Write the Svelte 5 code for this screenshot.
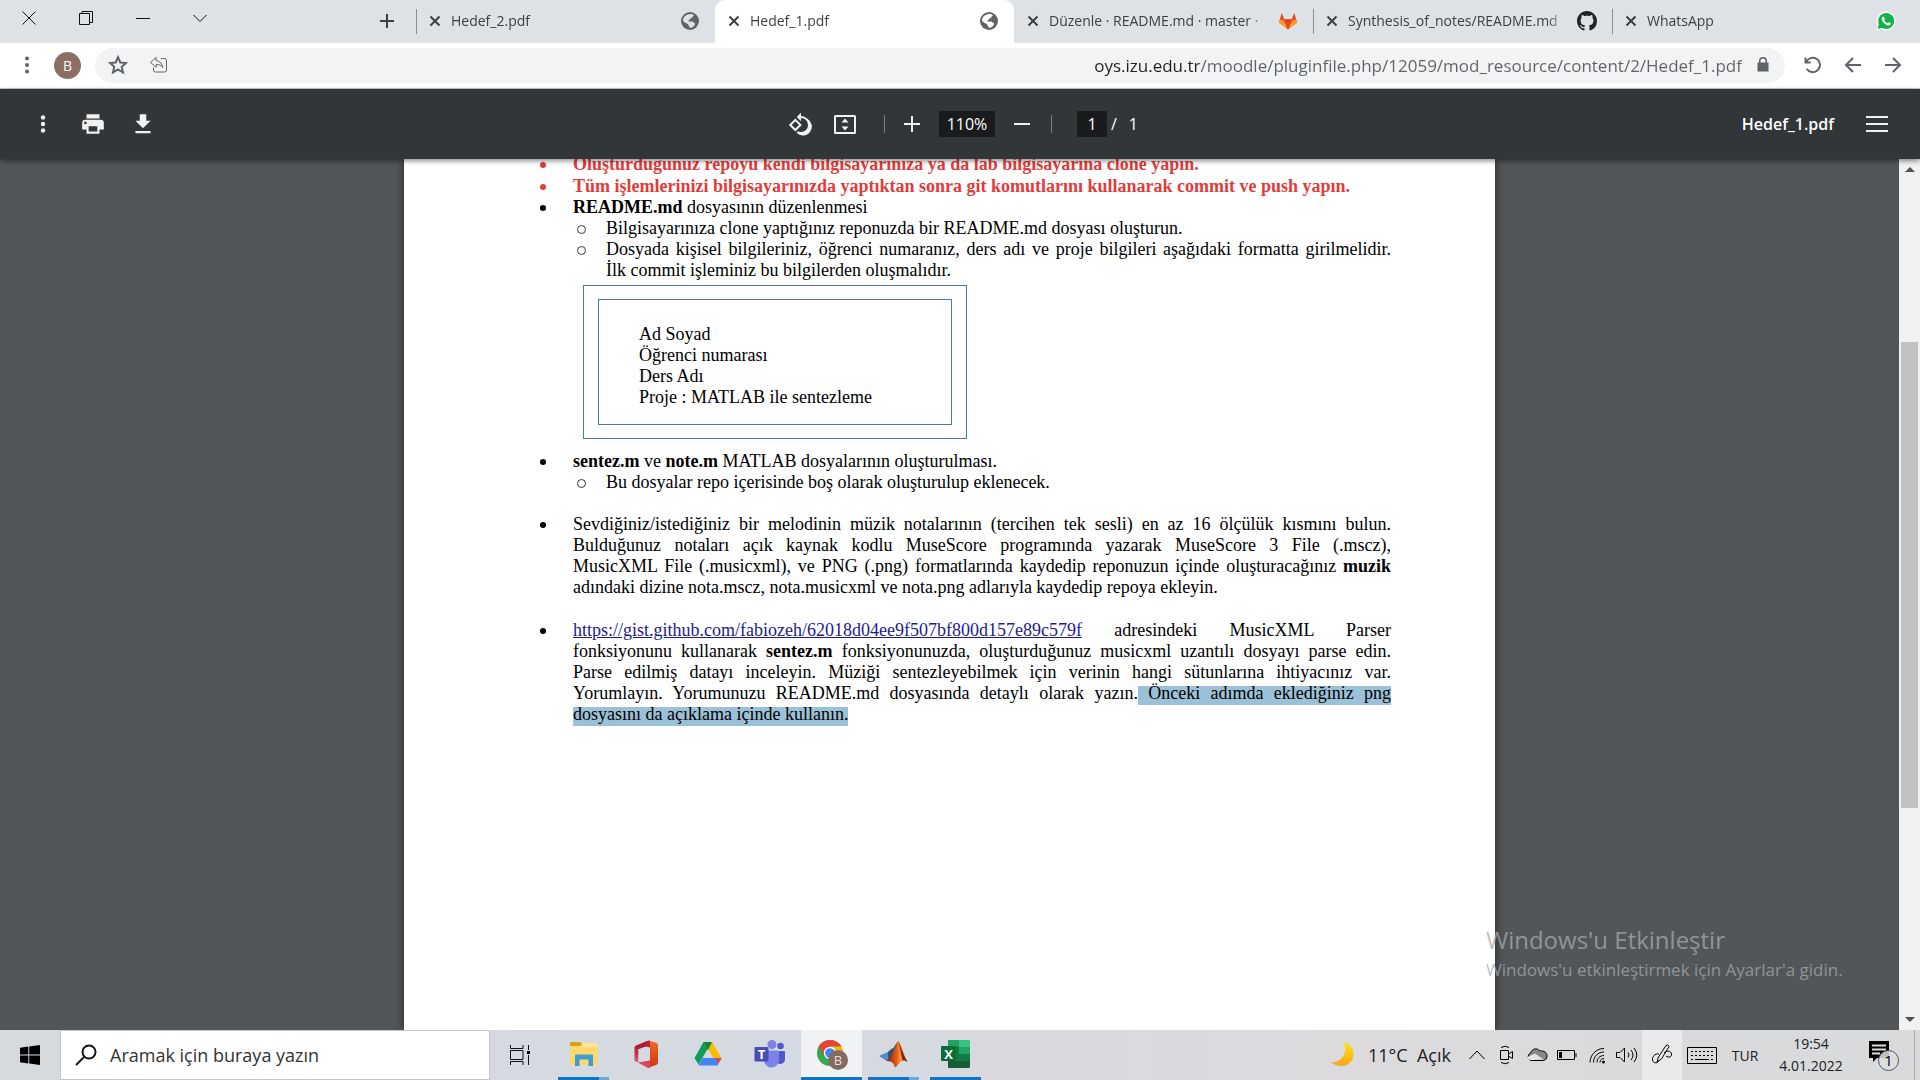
<script>
  const tabs = [
    { title: 'Hedef_2.pdf', icon: 'globe' },
    { title: 'Hedef_1.pdf', icon: 'globe', active: true },
    { title: 'Düzenle · README.md · master ·', icon: 'gitlab' },
    { title: 'Synthesis_of_notes/README.md', icon: 'github' },
    { title: 'WhatsApp', icon: 'whatsapp' },
  ];
  const apps = [
    { name: 'Dosya Gezgini', icon: 'explorer', state: 'multi' },
    { name: 'Office', icon: 'office' },
    { name: 'Google Drive', icon: 'drive' },
    { name: 'Microsoft Teams', icon: 'teams' },
    { name: 'Google Chrome', icon: 'chrome', state: 'focused' },
    { name: 'MATLAB', icon: 'matlab', state: 'multi' },
    { name: 'Excel', icon: 'excel', state: 'open' },
  ];
  let url = $state('oys.izu.edu.tr/moodle/pluginfile.php/12059/mod_resource/content/2/Hedef_1.pdf');
  let zoom = $state('110%');
  let pageNumber = $state('1');
  let query = $state('');
</script>

<div class="screen">
  <header class="tabstrip">
    <div class="window-controls">
      <button aria-label="Kapat"><svg width="14" height="14" viewBox="0 0 14 14"><path d="M.5.5l13 13M13.5.5l-13 13" /></svg></button>
      <button aria-label="Geri yükle"><svg width="14" height="14" viewBox="0 0 14 14"><path d="M.5 2.5h10v11H.5zM3 2.5v-2h10.500v11h-3" /></svg></button>
      <button aria-label="Simge durumuna küçült"><svg width="14" height="14" viewBox="0 0 14 14"><path d="M0 7.500h14" /></svg></button>
      <button aria-label="Sekmelerde ara"><svg width="14" height="14" viewBox="0 0 14 14"><path d="M.5 4l6.500 6.500L13.500 4" /></svg></button>
    </div>
    <button class="new-tab" aria-label="Yeni sekme"><svg width="16" height="16" viewBox="0 0 16 16"><path d="M8 1v14M1 8h14" /></svg></button>
    <nav class="tabs" aria-label="Sekmeler">
      {#each tabs as tab}
        <div class="tab" class:active={tab.active}>
          <button class="tab-close" aria-label="Sekmeyi kapat"><svg width="12" height="12" viewBox="0 0 12 12"><path d="M1.500 1.500l9 9M10.500 1.500l-9 9" /></svg></button>
          <span class="tab-title">{tab.title}</span>
          <svg class="favicon" width="20" height="20" viewBox="0 0 20 20">
            {#if tab.icon === 'globe'}
              <circle cx="10" cy="10" r="9" fill="#5f6368" />
              <path class="land" d="M9 3.200c1.800-.4 3.500-.2 4.800.7-.3 1.200-1.400 1.300-1.500 2.200 0 1-1 1.400-2 1.400-.2 1.200-1 1.600-1.800 1.700v1.200h4c1 .4 1 1.500 2.100 1.600.7.600.3 1.800-.4 2.500-1 1.400-2.600 2.300-4.400 2.400.1-1-.3-1.500-1-1.800-.6-.8-.3-1.700-1.200-2.400C5.500 12 4 11 2.900 9.400 3.100 6.200 5.700 3.600 9 3.200z" />
            {:else if tab.icon === 'gitlab'}
              <path fill="#e24329" d="M10 18.500l-9-7L3.700 2l2.500 6.300h7.600L16.300 2 19 11.500z" />
              <path fill="#fc6d26" d="M10 18.500L1 11.500l1-3.200h4.200zm0 0l9-7-1-3.200h-4.200z" />
              <path fill="#fca326" d="M10 18.500L1 11.500l1.200-2.800 4.500 4zm0 0l9-7-1.200-2.800-4.500 4z" />
              <path fill="#e24329" d="M10 18.500L6.200 8.300h7.600z" />
            {:else if tab.icon === 'github'}
              <path fill="#202328" transform="scale(1.25)" d="M8 0C3.580 0 0 3.580 0 8c0 3.540 2.290 6.530 5.470 7.590.4.070.55-.17.55-.38 0-.19-.01-.82-.01-1.490-2.010.37-2.530-.49-2.690-.94-.09-.23-.48-.94-.82-1.130-.28-.15-.68-.52-.01-.53.63-.01 1.080.58 1.230.82.72 1.210 1.870.87 2.330.66.070-.52.28-.87.51-1.070-1.780-.2-3.640-.89-3.640-3.950 0-.87.31-1.590.82-2.150-.08-.2-.36-1.020.08-2.120 0 0 .67-.21 2.200.82.64-.18 1.320-.27 2-.27s1.360.090 2 .27c1.530-1.040 2.200-.82 2.200-.82.44 1.100.16 1.920.08 2.120.51.560.82 1.270.82 2.150 0 3.070-1.870 3.750-3.650 3.950.29.25.54.73.54 1.480 0 1.070-.01 1.930-.01 2.200 0 .21.15.46.55.38A8.010 8.010 0 0016 8c0-4.420-3.580-8-8-8z" />
            {:else}
              <path fill="#fff" d="M10 .5a9.500 9.500 0 11-4.700 17.800L.5 19.700l1.400-4.800A9.500 9.500 0 0110 .5z" />
              <circle cx="10.200" cy="10" r="8" fill="#12b347" /><path fill="#12b347" d="M2.800 12.500L1.900 18l5.500-1.400z" />
              <path fill="#fff" d="M6.200 6.200c.8-1 1.500-.9 1.800-.2l.8 1.800c.1.500-.8 1.100-.6 1.500.7 1.300 1.700 2.200 3 2.800.5.200 1-1.100 1.500-.9l1.900.9c.5.400.2 1.500-.5 2-1.400 1.100-4 0-5.700-1.600C6.500 10.800 5 8.200 6.200 6.200z" />
            {/if}
          </svg>
        </div>
      {/each}
    </nav>
  </header>

  <div class="addressbar">
    <button class="menu" aria-label="Chrome menüsü"><svg width="20" height="20" viewBox="0 0 20 20" fill="#5f6368"><circle cx="10" cy="3.500" r="2" /><circle cx="10" cy="10" r="2" /><circle cx="10" cy="16.500" r="2" /></svg></button>
    <button class="avatar" aria-label="Profil">B</button>
    <div class="omnibox">
      <button aria-label="Yer işareti ekle"><svg width="20" height="20" viewBox="0 0 20 20"><path d="M10 2.200l2.300 5.300 5.700.5-4.300 3.800 1.300 5.700-5-3-5 3 1.300-5.700L2 8l5.700-.5z" /></svg></button>
      <button class="share" aria-label="Paylaş"><svg width="20" height="20" viewBox="0 0 20 20"><path d="M12 3.500h3.500a2 2 0 012 2v9.500a2 2 0 01-2 2H6.500a2 2 0 01-2-2V12.500M7.200 2.500L1.500 7.500l5.700 4.700V9.400c3 0 5 1 6.600 3.200-.4-3.600-2.600-6.400-6.600-7z" /></svg></button>
      <input class="url" aria-label="Adres" bind:value={url} />
      <button class="lock" aria-label="Site bilgileri"><svg width="14" height="18" viewBox="0 0 14 18"><path fill="#5f6368" stroke="none" d="M3 6.500V5a4 4 0 018 0v1.500h1.500v9h-11v-9zm1.500 0h5V5a2.500 2.500 0 00-5 0z" /></svg></button>
    </div>
    <nav class="history" aria-label="Gezinme">
      <button aria-label="Yenile"><svg width="20" height="20" viewBox="0 0 20 20"><path d="M3.500 6.500a7.200 7.200 0 11.200 7.200M2.500 2.500v5h5.200" /></svg></button>
      <button aria-label="Geri"><svg width="20" height="20" viewBox="0 0 20 20"><path d="M18 10H3M10 3l-7 7 7 7" /></svg></button>
      <button aria-label="İleri"><svg width="20" height="20" viewBox="0 0 20 20"><path d="M2 10h15M10 3l7 7-7 7" /></svg></button>
    </nav>
  </div>

  <div class="pdfbar">
    <div class="pdf-left">
      <button aria-label="Diğer işlemler"><svg width="24" height="24" viewBox="0 0 24 24"><circle cx="12" cy="5.500" r="2.200" /><circle cx="12" cy="12" r="2.200" /><circle cx="12" cy="18.500" r="2.200" /></svg></button>
      <button aria-label="Yazdır"><svg width="26" height="26" viewBox="0 0 24 24"><path d="M18 3H6v4h12zM19 8H5a3 3 0 00-3 3v6h4v4h12v-4h4v-6a3 3 0 00-3-3zm-3 11H8v-5h8zM5 12.200a1.200 1.200 0 110-2.400 1.200 1.200 0 010 2.400z" /></svg></button>
      <button aria-label="İndir"><svg width="26" height="26" viewBox="0 0 24 24"><path d="M19 9h-4V3H9v6H5l7 7zM5 18.500v2h14v-2z" /></svg></button>
    </div>
    <div class="pdf-center">
      <button aria-label="Döndür"><svg width="24" height="24" viewBox="0 0 24 24"><path d="M7.340 6.410L.86 12.900l6.490 6.480 6.490-6.480zM3.690 12.900l3.660-3.660L11 12.900l-3.660 3.660zM19.360 6.640A8.950 8.950 0 0013 4V.76L8.760 5 13 9.240V6a7 7 0 110 14 6.980 6.980 0 01-3-.68l-1.490 1.490A9 9 0 1019.360 6.640z" /></svg></button>
      <button aria-label="Sayfaya sığdır"><svg width="26" height="26" viewBox="0 0 26 26"><path fill-rule="evenodd" d="M3.500 4h19A1.500 1.500 0 0124 5.500v16a1.500 1.500 0 01-1.500 1.500h-19A1.500 1.500 0 012 21.500v-16A1.500 1.500 0 013.500 4zM4 6v15h18V6zM13 7.500l3.500 4h-7zM13 19.500l-3.500-4h7z" /></svg></button>
      <i class="rule zoom-rule"></i>
      <button class="small" aria-label="Yakınlaştır"><svg width="16" height="16" viewBox="0 0 16 16"><path d="M7 0h2v7h7v2H9v7H7V9H0V7h7z" /></svg></button>
      <input class="zoom" aria-label="Yakınlaştırma düzeyi" bind:value={zoom} />
      <button class="small" aria-label="Uzaklaştır"><svg width="16" height="16" viewBox="0 0 16 16"><path d="M0 7h16v2H0z" /></svg></button>
      <i class="rule page-rule"></i>
      <input class="page-no" aria-label="Sayfa numarası" bind:value={pageNumber} />
      <span class="slash">/</span><span class="total">1</span>
    </div>
    <div class="pdf-right">
      <span>Hedef_1.pdf</span>
      <button aria-label="Kenar çubuğu"><svg width="22" height="18" viewBox="0 0 22 18"><path d="M0 1h22v2H0zM0 8h22v2H0zM0 15h22v2H0z" /></svg></button>
    </div>
  </div>

  <div class="viewer">
    <div class="canvas">
      <main class="paper">
        <ul class="doc">
          <li class="red cut">Oluşturduğunuz repoyu kendi bilgisayarınıza ya da lab bilgisayarına clone yapın.</li>
          <li class="red">Tüm işlemlerinizi bilgisayarınızda yaptıktan sonra git komutlarını kullanarak commit ve push yapın.</li>
          <li><b>README.md</b> dosyasının düzenlenmesi
            <ul>
              <li>Bilgisayarınıza clone yaptığınız reponuzda bir README.md dosyası oluşturun.</li>
              <li><span class="full">Dosyada kişisel bilgileriniz, öğrenci numaranız, ders adı ve proje bilgileri aşağıdaki formatta girilmelidir.</span> İlk commit işleminiz bu bilgilerden oluşmalıdır.</li>
            </ul>
            <div class="frame"><div class="frame-inner">
              <p>Ad Soyad</p><p>Öğrenci numarası</p><p>Ders Adı</p><p>Proje : MATLAB ile sentezleme</p>
            </div></div>
          </li>
          <li class="files"><b>sentez.m</b> ve <b>note.m</b> MATLAB dosyalarının oluşturulması.
            <ul><li>Bu dosyalar repo içerisinde boş olarak oluşturulup eklenecek.</li></ul>
          </li>
          <li class="spaced">
            <span class="full">Sevdiğiniz/istediğiniz bir melodinin müzik notalarının (tercihen tek sesli) en az 16 ölçülük kısmını bulun.</span>
            <span class="full">Bulduğunuz notaları açık kaynak kodlu MuseScore programında yazarak MuseScore 3 File (.mscz),</span>
            <span class="full">MusicXML File (.musicxml), ve PNG (.png) formatlarında kaydedip reponuzun içinde oluşturacağınız <b>muzik</b></span>
            adındaki dizine nota.mscz, nota.musicxml ve nota.png adlarıyla kaydedip repoya ekleyin.
          </li>
          <li class="spaced"><a href="https://gist.github.com/fabiozeh/62018d04ee9f507bf800d157e89c579f">https://gist.github.com/fabiozeh/62018d04ee9f507bf800d157e89c579f</a> adresindeki MusicXML Parser fonksiyonunu kullanarak <b>sentez.m</b> fonksiyonunuzda, oluşturduğunuz musicxml uzantılı dosyayı parse edin. Parse edilmiş datayı inceleyin. Müziği sentezleyebilmek için verinin hangi sütunlarına ihtiyacınız var. Yorumlayın. Yorumunuzu README.md dosyasında detaylı olarak yazın.<mark>{' '}Önceki adımda eklediğiniz png dosyasını da açıklama içinde kullanın.</mark></li>
        </ul>
      </main>
    </div>
    <div class="scrollbar" aria-hidden="true">
      <svg width="21" height="21" viewBox="0 0 21 21"><path d="M6 13l5-5 5 5z" /></svg>
      <div class="track"><i class="before"></i><i class="thumb"></i><i class="after"></i></div>
      <svg width="21" height="21" viewBox="0 0 21 21"><path d="M6 8l5 5 5-5z" /></svg>
    </div>
    <aside class="activation">
      <p class="act-title">Windows'u Etkinleştir</p>
      <p>Windows'u etkinleştirmek için Ayarlar'a gidin.</p>
    </aside>
  </div>

  <footer class="taskbar">
    <button class="start" aria-label="Başlat"><svg width="20" height="20" viewBox="0 0 20 20"><path d="M0 2.800l8.300-1.200v8H0zM9.200 1.500L20 0v9.600H9.200zM0 10.500h8.300v7.900L0 17.200zM9.200 10.500H20V20L9.200 18.500z" /></svg></button>
    <label class="search">
      <svg width="22" height="22" viewBox="0 0 22 22"><circle cx="14" cy="8" r="6.500" /><path d="M9.400 12.600L1 21" /></svg>
      <input type="text" placeholder="Aramak için buraya yazın" bind:value={query} />
    </label>
    <button class="taskview" aria-label="Görev görünümü"><svg width="20" height="20" viewBox="0 0 20 20"><path d="M.5 0v3.500h12.500V0M.5 20v-3.500h12.500V20M.5 5.500h12.500v9H.5zM18.500 0v5M18.500 10v10" /><path d="M17 6h3v3h-3z" fill="#000" stroke="none" /></svg></button>
    <div class="apps">
      {#each apps as app}
        <button class="app {app.state ?? ''}" aria-label={app.name}>
          <svg width="32" height="32" viewBox="0 0 32 32">
            {#if app.icon === 'explorer'}
              <path fill="#d9a21b" d="M2 5a1 1 0 011-1h9l2 2-1 3H2z" /><path fill="#ffd96a" d="M2 8h11l2-3h13a1.500 1.500 0 011.500 1.500V26a1 1 0 01-1 1H3a1 1 0 01-1-1z" />
              <path fill="#ffe59a" d="M15 5h13a1.500 1.500 0 011.500 1.500V9H13z" /><path fill="#3f9bd3" d="M7 17.500a1 1 0 011-1h16a1 1 0 011 1V28h-4.500v-6.500h-9V28H7z" />
            {:else if app.icon === 'office'}
              <defs><linearGradient id="officeRed" x1="0" y1="0" x2="0" y2="1"><stop offset="0" stop-color="#a30f24" /><stop offset=".55" stop-color="#c22d4a" /><stop offset="1" stop-color="#e65a74" /></linearGradient><linearGradient id="officeOrange" x1="0" y1="0" x2="0" y2="1"><stop stop-color="#f06a21" /><stop offset="1" stop-color="#cb3716" /></linearGradient></defs>
              <path fill="url(#officeRed)" d="M18.500 2.500L6 7.500a2.600 2.600 0 00-1.500 2.400v13.200l3.800 1.500V11.200l7.700-2.800z" /><path fill="url(#officeOrange)" d="M18.500 2.500l7.600 2.300A2.600 2.600 0 0128 7.300v17.300a2.600 2.600 0 01-1.900 2.500L19 29.500 20 21V9z" /><path fill="#d94558" d="M8 24.500l12-2V30h-2z" /><path fill="#c3202e" d="M16 3.600l4-1v7l-4-1z" />
            {:else if app.icon === 'drive'}
              <path fill="#0f9d58" d="M11.500 4L2.500 20l4 6.500L16 10.200z" /><path fill="#ffba00" d="M12 4h8l9.500 16.300h-8z" /><path fill="#4285f4" d="M10.300 20h19.200l-4 7.500H6.500z" /><path fill="#188038" d="M11.500 4L16 12l4-8z" /><path fill="#ea4335" d="M23 20.500h6.500l-3.200 5z" />
            {:else if app.icon === 'teams'}
              <circle cx="18" cy="6.500" r="4.500" fill="#7b83eb" /><circle cx="26.500" cy="8" r="3.300" fill="#5059c9" /><path fill="#5059c9" d="M21 13h9a1 1 0 011 1v7a5 5 0 01-9 3z" /><path fill="#7b83eb" d="M10 12.500h14a1 1 0 011 1V22a7.500 7.500 0 01-15 0z" /><path fill="#4a4eb0" d="M1.500 9h12a1 1 0 011 1v12.500a1 1 0 01-1 1h-12a1 1 0 01-1-1V10a1 1 0 011-1z" /><text x="7.500" y="21" text-anchor="middle" class="glyph">T</text>
            {:else if app.icon === 'chrome'}
              <circle cx="14" cy="15" r="13" fill="#34a853" /><path fill="#ea4335" d="M2.700 8.500A13 13 0 0125.300 8.500H14L8.400 18.200z" /><path fill="#fbbc04" d="M25.300 8.500A13 13 0 0114 28l5.600-9.800L14 8.500z" /><circle cx="14" cy="15" r="6.200" fill="#fff" /><circle cx="14" cy="15" r="4.800" fill="#4285f4" /><circle cx="22" cy="22" r="10" fill="#846a61" /><text x="22" y="27" text-anchor="middle" class="glyph soft">B</text>
            {:else if app.icon === 'matlab'}
              <defs><linearGradient id="peak" x1="0" y1="0" x2="1" y2="0"><stop stop-color="#7b1f12" /><stop offset=".5" stop-color="#e55b16" /><stop offset=".7" stop-color="#f9a04a" /><stop offset="1" stop-color="#a92b10" /></linearGradient></defs>
              <path fill="#4b8fc4" d="M1 18l9-4 4-4 3 2-6 11-3-.5z" /><path fill="#27556f" d="M10 14l5-3.500L20 3l-4 16-5.500 4z" /><path fill="url(#peak)" d="M8 23c6-3 8-13 12-20 3 1 5.500 14 9.500 21-4-3-6.500-1-9 2-1 1.500-2.500 3-4 3.500 0-4-3-7-8.500-6.500z" /><path fill="#7b2110" d="M21 4c2 5 4 13 8.500 20-2-1.500-3.500-2-4.800-1.500C23 16 22 10 21 4z" />
            {:else}
              <path fill="#21a366" d="M9 2h19.500A1.500 1.500 0 0130 3.500V9H19l-11-1V3a1 1 0 011-1z" /><path fill="#33c481" d="M19 2h9.500A1.500 1.500 0 0130 3.500V9H19z" /><path fill="#107c41" d="M8 8.500h11V23H8z" /><path fill="#21a366" d="M19 9h11v7H19z" /><path fill="#107c41" d="M19 16h11v7H19z" /><path fill="#185c37" d="M8 23h22v5.500a1.500 1.500 0 01-1.500 1.500H9a1 1 0 01-1-1z" /><path fill="#0d6b38" d="M2 8h13a1 1 0 011 1v13a1 1 0 01-1 1H2a1 1 0 01-1-1V9a1 1 0 011-1z" /><text x="8.500" y="20.500" text-anchor="middle" class="glyph">X</text>
            {/if}
          </svg>
        </button>
      {/each}
    </div>

    <div class="tray">
      <button class="weather">
        <svg width="24" height="28" viewBox="0 0 24 28"><defs><linearGradient id="moon" x1="0" y1="0" x2="0" y2="1"><stop stop-color="#ffe600" /><stop offset="1" stop-color="#f5a523" /></linearGradient></defs><path fill="url(#moon)" stroke="none" d="M14 1c8 3 11.500 10 8.500 17-3.500 8-15 9.500-21.500 3 5.500.5 10.500-2 13-7 1.700-4.500 1.500-9 0-13z" /></svg>
        <span>11°C&nbsp; Açık</span>
      </button>
      <button aria-label="Gizli simgeler"><svg width="18" height="20" viewBox="0 0 18 20"><path d="M1.500 14L9 6l7.500 8" /></svg></button>
      <button aria-label="Toplantı"><svg width="18" height="20" viewBox="0 0 18 20"><path d="M2.500 5.500h8v9h-8zM10.500 9l4-2.500v7l-4-2.500M3 2.500Q7 0 11 2.500M3 17.500q4 2.500 8 0" /></svg></button>
      <button aria-label="OneDrive"><svg width="22" height="20" viewBox="0 0 22 20"><path fill="#888" d="M5 15.500a4 4 0 01-.5-7.500C6 3.500 11 2.500 14 6c4-.5 7 1.500 7 5 0 3-2 4.500-4.500 4.500z" /><path fill="#e4e4e4" stroke="none" d="M5 15c-1.800 0-3.200-1-3.500-3L9 8.500l9 6.300z" /></svg></button>
      <button aria-label="Pil"><svg width="20" height="20" viewBox="0 0 20 20"><path d="M.5 5.500h17v9H.5zM19 8v4" /><path d="M2 7h3v6H2z" fill="#000" stroke="none" /></svg></button>
      <button aria-label="Wi-Fi"><svg width="18" height="20" viewBox="0 0 18 20"><path d="M2 17.500C2 10 8 3.500 16 3.500M5.500 17.500c0-6 4.500-10.500 10.500-10.500M9 17.500c0-4 3-7 7-7M12 17.500c0-2.500 1.500-4 4-4" /><circle cx="15.500" cy="17" r="1.500" fill="#000" stroke="none" /></svg></button>
      <button aria-label="Ses"><svg width="22" height="20" viewBox="0 0 22 20"><path d="M.5 7.500h3.500L8.500 3v14L4 12.500H.5zM12 7.500q2 2.500 0 5M15 5q4 5 0 10M18 3q5.500 7 0 14" /></svg></button>
      <button class="pen" aria-label="Windows Ink"><svg width="22" height="24" viewBox="0 0 22 24"><path d="M6 19l1.500-5 7.500-11.500q2-1.500 3 1L10.500 16zM8 11c-4-1-7 3-6.500 6s4 4 6 1M13 10c3-3 7-2 7.500 1s-3 4-5.500 2" /></svg></button>
      <button class="keyboard" aria-label="Dokunmatik klavye"><svg width="30" height="20" viewBox="0 0 30 20"><path d="M.5 2.500h29v16H.5z" /><path stroke-dasharray="2 2" d="M4 6.500h22M4 10.500h22" /><path d="M4 14.500h2M8 14.500h14M24 14.500h2" /></svg></button>
      <button class="lang">TUR</button>
      <button class="clock"><span>19:54</span><span>4.01.2022</span></button>
      <button class="notices" aria-label="1 yeni bildirim"><svg width="32" height="34" viewBox="0 0 32 34"><path fill="#000" stroke="none" d="M1 3h20v17H9l-4 4v-4H1z" /><path stroke="#ddd" stroke-width="2" d="M4 7.500h14M4 11.500h14M4 15.500h8" /><circle cx="20.500" cy="22.500" r="10" fill="#dcdde0dd" stroke="#555" /><text x="20.500" y="28" text-anchor="middle" class="count">1</text></svg></button>
    </div>
  </footer>
</div>

<style>
  :global(body) { margin: 0; }
  .screen { height: 100vh; display: flex; flex-direction: column; overflow: hidden; font-family: "Open Sans", "Noto Sans", sans-serif; color: #202124; }
  .screen * { box-sizing: border-box; }
  button { border: 0; padding: 0; margin: 0; background: none; font: inherit; color: inherit; display: flex; align-items: center; justify-content: center; flex: none; }
  input { border: 0; padding: 0; margin: 0; font: inherit; min-width: 0; outline: 0; }
  svg { display: block; flex: none; }
  p { margin: 0; }

  .tabstrip { flex: none; height: 43px; display: flex; background: #dee1e6; padding-right: 9px; }
  .window-controls { display: flex; align-items: flex-start; }
  .window-controls button { width: 57px; height: 36px; }
  .window-controls svg { fill: none; stroke: #111; stroke-width: 1; }
  .new-tab { width: 58px; margin-left: 130px; padding-bottom: 2px; }
  .new-tab svg { fill: none; stroke: #3c4043; stroke-width: 2; }
  .tabs { flex: 1; min-width: 0; display: flex; }
  .tab { flex: 1 1 0; min-width: 0; display: flex; align-items: center; gap: 10px; padding: 0 15px 2px 13px; background: linear-gradient(#8b8e93, #8b8e93) left center / 1px 25px no-repeat; }
  .tab.active { background: #fff; border-radius: 10px 10px 0 0; }
  .tab.active + .tab { background: none; }
  .tab-close svg { fill: none; stroke: #3c4043; stroke-width: 2; }
  .tab-title { flex: 1; min-width: 0; overflow: hidden; white-space: nowrap; font-size: 14px; line-height: 20px; color: #3c4043; -webkit-mask-image: linear-gradient(to left, transparent, #000 20px); mask-image: linear-gradient(to left, transparent, #000 20px); }
  .land { fill: #dee1e6; }
  .active .land { fill: #fff; }

  .addressbar { flex: none; height: 46px; display: flex; align-items: center; padding: 0 7px 1px; background: #fff; border-bottom: 1px solid #c9cbce; }
  .menu { width: 40px; }
  .avatar { width: 27px; height: 27px; margin: 0 14px 0 7px; border-radius: 50%; background: #8d6e63; color: #fff; font-size: 14px; }
  .omnibox { flex: 1; min-width: 0; height: 35px; display: flex; align-items: center; border-radius: 18px; background: #f1f3f4; padding: 0 15px 0 2px; }
  .omnibox button { width: 41px; }
  .omnibox svg, .history svg { fill: none; stroke: #5f6368; stroke-width: 2; }
  .omnibox .share svg { stroke-width: 1; }
  .omnibox .lock { width: 14px; margin-left: 14px; }
  .url { flex: 1; height: 30px; text-align: right; font-size: 17px; background: linear-gradient(to left, #5f6368 543px, #202124 543px); -webkit-background-clip: text; background-clip: text; -webkit-text-fill-color: transparent; }
  .history { display: flex; margin-left: 8px; }
  .history button { width: 40px; }

  .pdfbar { flex: none; position: relative; z-index: 1; height: 70px; display: grid; grid-template-columns: 1fr auto 1fr; align-items: center; background: #323639; color: #fff; box-shadow: 0 2px 5px rgba(0, 0, 0, .45); }
  .pdfbar svg { fill: #f1f1f1; }
  .pdf-left, .pdf-center, .pdf-right { display: flex; align-items: center; }
  .pdf-left { padding-left: 18px; }
  .pdf-left button { width: 50px; }
  .pdf-center { padding-right: 4px; font-size: 16px; line-height: 26px; }
  .pdf-center button { width: 45px; }
  .pdf-center .small { width: 34px; }
  .rule { width: 1px; height: 18px; background: #7b7e80; }
  .zoom-rule { margin: 0 10px 0 16px; }
  .page-rule { margin: 0 25px 0 12px; }
  .pdf-center input { height: 26px; text-align: center; color: #fff; background: #191b1c; }
  .zoom { width: 56px; margin: 0 10px; }
  .page-no { width: 30px; }
  .slash { margin: 0 12px 0 4px; }
  .pdf-right { justify-content: flex-end; gap: 32px; padding-right: 32px; font-size: 16px; font-weight: 600; }

  .viewer { flex: 1; min-height: 0; position: relative; display: flex; background: #525659; }
  .canvas { flex: 1; min-width: 0; display: flex; justify-content: center; overflow: hidden; }
  .paper { flex: 0 1 1091px; min-width: 0; background: #fff; box-shadow: 0 0 8px rgba(0, 0, 0, .6); padding: 0 104px 0 136px; font: 18px/21px "Liberation Serif", serif; color: #000; }
  .doc { margin: -5px 0 0; padding: 0; }
  .doc, .doc ul { list-style: none; }
  .doc li { position: relative; text-align: justify; }
  .doc > li { padding-left: 33px; }
  .doc > li::before { content: ""; position: absolute; left: 0; top: 8px; width: 6px; height: 6px; border-radius: 50%; background: currentColor; }
  .doc ul { margin: 0; padding: 0 0 0 33px; }
  .doc ul li::before { content: ""; position: absolute; left: -29px; top: 7px; width: 7px; height: 7px; border: 1px solid #333; border-radius: 50%; }
  .full { display: block; text-align-last: justify; }
  .red { color: #e23b3b; font-weight: 700; }
  .red.cut { margin-bottom: 1px; }
  .frame { width: 384px; margin: 4px 0 0 10px; padding: 13px 14px; border: 1px solid #4f77a8; }
  .frame-inner { padding: 24px 40px 16px; border: 1px solid #4f77a8; }
  .files { margin-top: 12px; }
  .spaced { margin-top: 21px; }
  .spaced + .spaced { margin-top: 22px; }
  .doc a { color: #1c1c8c; text-decoration: underline; }
  mark { color: inherit; padding-bottom: 2px; background: linear-gradient(transparent 3px, #9bc1d9 3px); }

  .scrollbar { flex: none; width: 21px; display: flex; flex-direction: column; background: #f1f1f1; }
  .scrollbar svg { fill: #505050; }
  .track { flex: 1; display: flex; flex-direction: column; padding: 0 2px; }
  .before { flex: 162; }
  .thumb { flex: 466; background: #c1c1c1; }
  .after { flex: 201; }
  .activation { position: absolute; right: 79px; bottom: 47px; width: 355px; white-space: nowrap; color: rgba(168, 170, 172, .75); font-size: 17px; line-height: 26px; }
  .act-title { font-size: 24px; line-height: 34px; }

  .taskbar { flex: none; height: 50px; display: flex; background: linear-gradient(90deg, #d6dadd, #d5d9e1 40%, #dcdadd 70%, #d8dadc); }
  .start { width: 60px; }
  .search { flex: 0 1 430px; min-width: 0; display: flex; align-items: center; gap: 13px; padding-left: 14px; background: #fff; border: 1px solid #c6c6c6; }
  .search svg, .taskview svg { fill: none; stroke: #111; stroke-width: 1; }
  .search circle, .search path { stroke-width: 2; }
  .search input { flex: 1; font-size: 18px; }
  .search input::placeholder { color: #333; opacity: 1; }
  .taskview { width: 60px; margin-right: 3px; }
  .apps { display: flex; gap: 1px; }
  .app { position: relative; width: 61px; border-bottom: 3px solid transparent; background-clip: padding-box; }
  .app.focused { background: #f0f2f3; border-bottom-color: #0f75c6; }
  .app.open::after, .app.multi::after { content: ""; position: absolute; left: 5px; right: 5px; bottom: -3px; height: 3px; background: #0f75c6; }
  .app.multi::after { background: linear-gradient(90deg, #0f75c6 80%, #6aa9dc 80%); }
  .glyph { font-size: 13px; font-weight: 700; fill: #fff; }
  .glyph.soft { font-weight: 400; fill: #e8dcd8; }
  .tray { margin-left: auto; display: flex; padding-right: 5px; }
  .tray button { width: 30px; }
  .tray svg { fill: none; stroke: #000; stroke-width: 1; }
  .tray .weather { width: 132px; gap: 14px; justify-content: flex-start; font-size: 18px; white-space: nowrap; }
  .tray .pen { width: 40px; background: #e9e9eb; }
  .tray .keyboard { width: 40px; }
  .tray .lang { width: 46px; font-size: 14px; }
  .tray .clock { width: 86px; flex-direction: column; font-size: 14px; line-height: 22px; }
  .tray .notices { width: 61px; border-right: 1px solid #aaa; }
  .tray .count { font-size: 15px; fill: #000; stroke: none; }
</style>
